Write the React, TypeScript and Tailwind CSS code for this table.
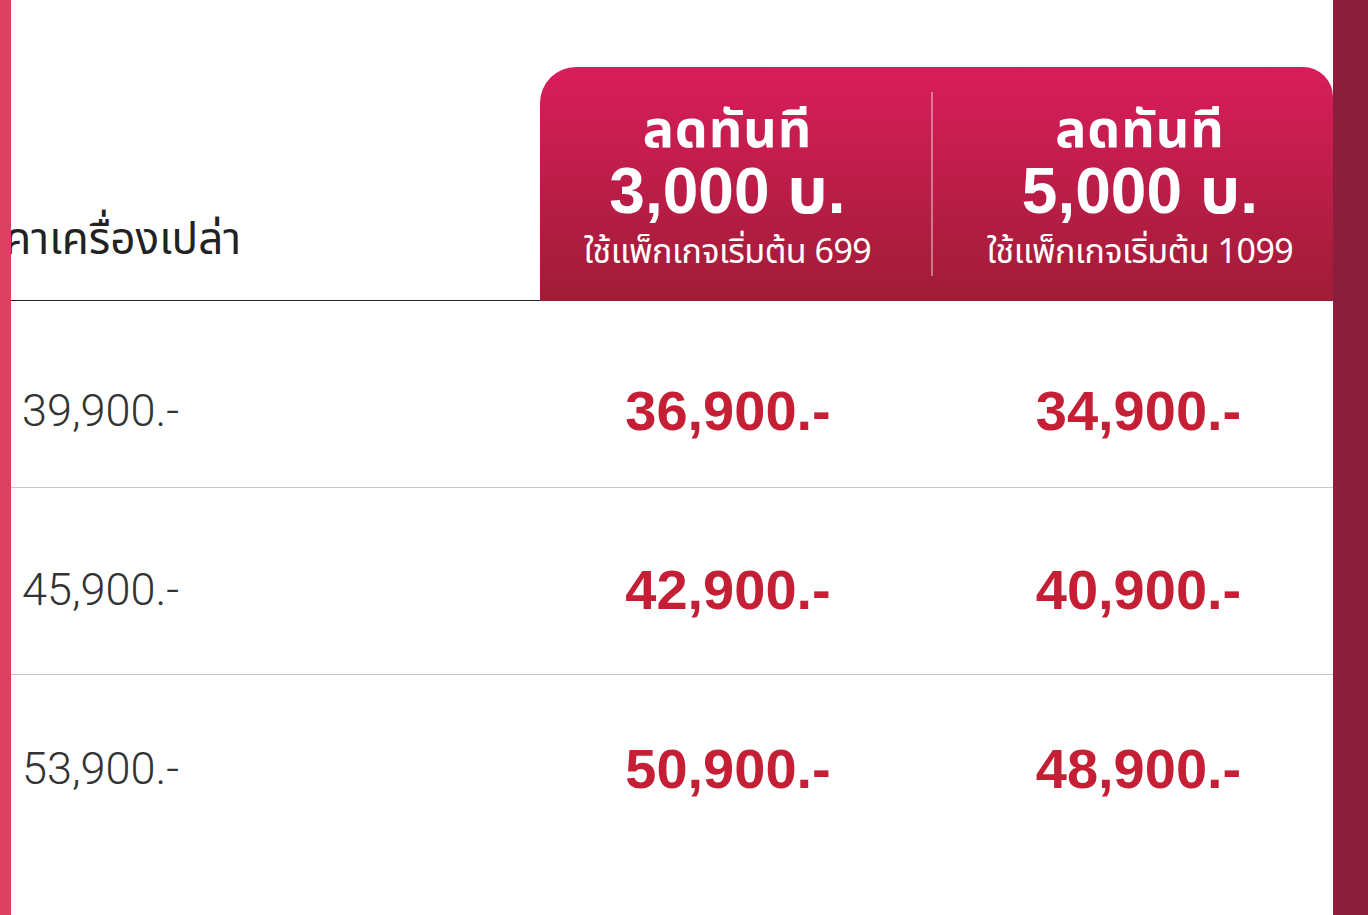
import React from 'react';

const rows = [
  { base: '39,900.-', p1: '36,900.-', p2: '34,900.-', pad: 'pt-[33px]' },
  { base: '45,900.-', p1: '42,900.-', p2: '40,900.-', pad: 'pt-[18px]' },
  { base: '53,900.-', p1: '50,900.-', p2: '48,900.-', pad: 'pt-0' },
];

const thai = "font-['Noto_Sans_Thai','Liberation_Sans','Noto_Sans',sans-serif]";
const num = "font-['Liberation_Sans','Noto_Sans_Thai',sans-serif]";

function OfferHead({ amount, pkg, className }: { amount: string; pkg: string; className: string }) {
  return (
    <div className={`flex flex-col items-center pt-[38px] text-white ${className}`}>
      <div className={`${thai} text-[52px] font-bold leading-[52px] tracking-[1px]`}>ลดทันที</div>
      <div className={`${num} mt-[2px] text-[64px] font-bold leading-[64px]`}>{amount} บ.</div>
      <div className={`${thai} mt-[10px] text-[34px] leading-[40px] tracking-[-0.5px]`}>{pkg}</div>
    </div>
  );
}

export default function App() {
  return (
    <div className="flex h-[915px] w-[1368px] overflow-hidden bg-white">
      <div className="w-[11px] shrink-0 bg-[#dc4060]" />

      <div className="flex w-[1322px] flex-col">
        <div className="h-[67px]" />

        {/* header */}
        <div className="grid h-[234px] grid-cols-[529px_793px]">
          <div className="flex items-end overflow-hidden border-b border-[#222] pb-[34px]">
            <span className={`${thai} -ml-[46px] whitespace-nowrap text-[44px] leading-[50px] text-[#222]`}>
              ราคาเครื่องเปล่า
            </span>
          </div>
          <div className="flex rounded-tl-[36px] rounded-tr-[30px] bg-gradient-to-b from-[#d91d5b] to-[#a01c36]">
            <OfferHead className="w-[391px] pr-[16px]" amount="3,000" pkg="ใช้แพ็กเกจเริ่มต้น 699" />
            <div className="my-[25px] w-[2px] bg-white/40" />
            <OfferHead className="flex-1 pl-[14px]" amount="5,000" pkg="ใช้แพ็กเกจเริ่มต้น 1099" />
          </div>
        </div>

        {/* rows */}
        {rows.map((r, i) => (
          <div
            key={r.base}
            className={`grid h-[187px] grid-cols-[529px_392px_401px] items-center ${r.pad} ${
              i < rows.length - 1 ? 'border-b border-[#c8c8c8]' : ''
            }`}
          >
            <div className="pl-[11px] font-['Roboto',sans-serif] text-[45px] font-light text-[#333]">{r.base}</div>
            <div className={`${num} pr-[16px] text-center text-[56px] font-bold text-[#c51f35]`}>{r.p1}</div>
            <div className={`${num} pl-[12px] text-center text-[56px] font-bold text-[#c51f35]`}>{r.p2}</div>
          </div>
        ))}
      </div>

      <div className="w-[35px] shrink-0 bg-[#8b1e3c]" />
    </div>
  );
}
